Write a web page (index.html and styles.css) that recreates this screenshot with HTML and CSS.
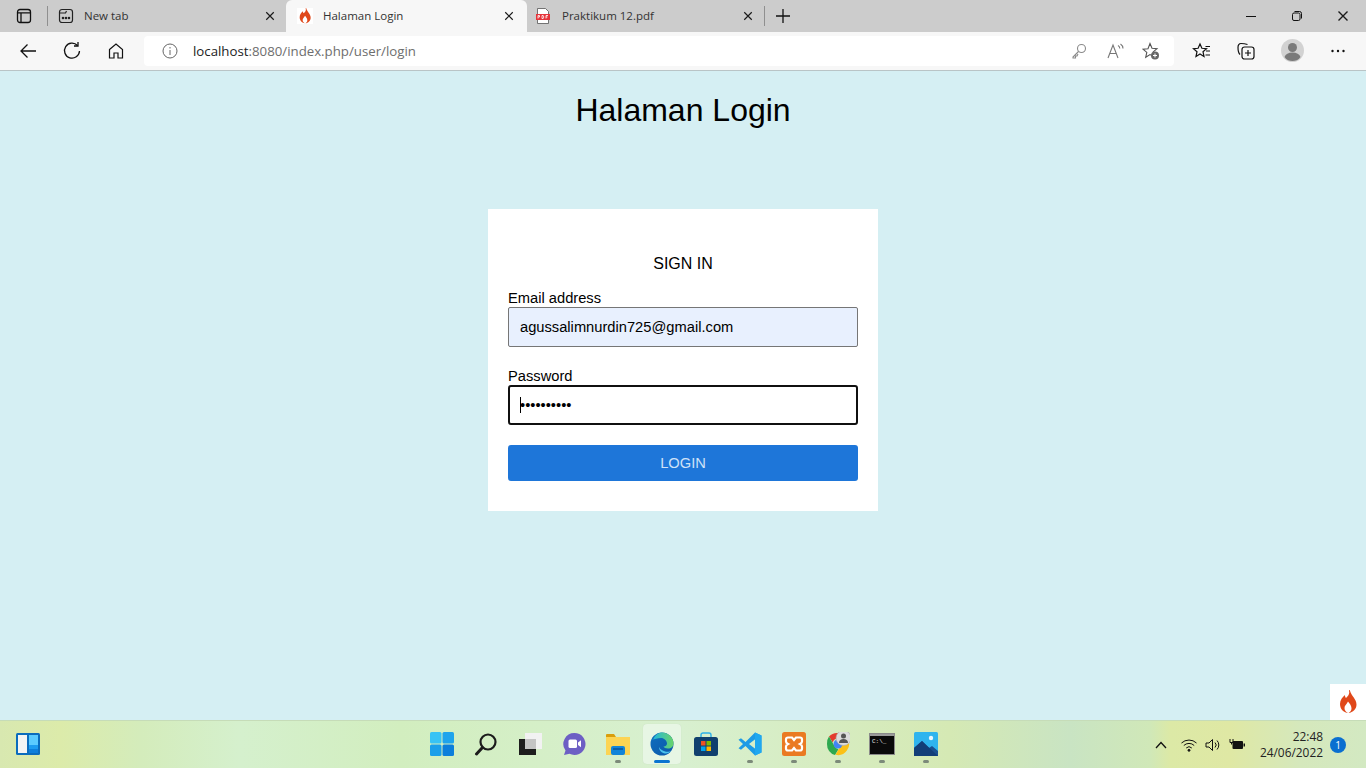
FILE: index.html
```html
<!DOCTYPE html>
<html lang="en">
<head>
    <meta charset="UTF-8">
    <title>Halaman Login</title>
    <link rel="stylesheet" href="styles.css">
</head>
<body>
    <svg class="defs" width="0" height="0">
        <symbol id="flame" viewBox="0 0 24 24">
            <path fill="#e0481a" d="M13 1c1 3-1 5-3 7-1-1-1-2-1-3-2.500 2-5 5-5 9 0 5 3.500 8.500 8 9-2-1-3.500-2.500-3.500-5 0-2.500 2-3.500 3.500-6.500 1 1.500 3.500 3.800 3.500 6.800 0 2-1 3.700-3 4.700 4.500-.5 8-4 8-8.500 0-6-5.500-8-7-15.500z"/>
        </symbol>
        <symbol id="close" viewBox="0 0 12 12">
            <path d="M1.500 1.500l9 9M10.500 1.500l-9 9" fill="none" stroke="#1a1a1a" stroke-width="1.400"/>
        </symbol>
    </svg>

    <!-- Tab strip -->
    <div class="tabstrip">
        <div class="tab-actions">
            <svg width="16" height="16" viewBox="0 0 16 16" fill="none" stroke="#111" stroke-width="1.300"><rect x="1.500" y="1.500" width="13" height="13" rx="2.500"/><path d="M1.500 4.800h13M5 4.800v9.700"/></svg>
        </div>
        <span class="tab-sep"></span>
        <div class="tab tab-first">
            <svg class="tab-icon" width="16" height="16" viewBox="0 0 16 16" fill="none" stroke="#222" stroke-width="1.200"><rect x="1.500" y="1.500" width="13" height="13" rx="2.500"/><path d="M1.500 5h6l1-2"/><circle cx="5" cy="10" r=".7" fill="#222"/><circle cx="8" cy="10" r=".7" fill="#222"/><circle cx="11" cy="10" r=".7" fill="#222"/></svg>
            <span class="tab-title">New tab</span>
            <svg class="tab-close" width="10" height="10"><use href="#close"/></svg>
        </div>
        <div class="tab tab-active">
            <svg class="tab-icon tab-icon-ci" width="16" height="16"><use href="#flame"/></svg>
            <span class="tab-title">Halaman Login</span>
            <svg class="tab-close" width="10" height="10"><use href="#close"/></svg>
        </div>
        <div class="tab tab-last">
            <svg class="tab-icon" width="16" height="16" viewBox="0 0 16 16"><path d="M2.500.5h8l3 3v12h-11z" fill="#fff" stroke="#555" stroke-width=".8"/><rect x="1" y="6" width="14" height="6" fill="#e5343a"/><path d="M3 7.500v3M3 7.500h1.500v1.500H3M7 7.500v3h1.200l.6-1.500-.6-1.500zM11 7.500v3M11 7.500h2M11 9h1.500" fill="none" stroke="#fff" stroke-width=".8"/></svg>
            <span class="tab-title">Praktikum 12.pdf</span>
            <svg class="tab-close" width="10" height="10"><use href="#close"/></svg>
        </div>
        <span class="tab-sep"></span>
        <div class="new-tab">
            <svg width="16" height="16" viewBox="0 0 16 16"><path d="M8 1v14M1 8h14" stroke="#111" stroke-width="1.300"/></svg>
        </div>
        <div class="window-controls">
            <div class="win-btn"><svg width="12" height="12" viewBox="0 0 12 12"><path d="M1 6.500h10" stroke="#111" stroke-width="1"/></svg></div>
            <div class="win-btn"><svg width="12" height="12" viewBox="0 0 12 12" fill="none" stroke="#111"><rect x="1.500" y="3" width="7.500" height="7.500" rx="1.500"/><path d="M3.500 1.500h5a2 2 0 0 1 2 2v5"/></svg></div>
            <div class="win-btn"><svg width="12" height="12"><use href="#close"/></svg></div>
        </div>
    </div>

    <!-- Toolbar -->
    <div class="toolbar">
        <div class="tool-btn"><svg width="20" height="20" viewBox="0 0 20 20" fill="none" stroke="#111" stroke-width="1.300"><path d="M18 10H3M9.500 3.500L3 10l6.500 6.500"/></svg></div>
        <div class="tool-btn"><svg width="20" height="20" viewBox="0 0 20 20" fill="none" stroke="#111" stroke-width="1.300"><path d="M15.500 4.500A7.500 7.500 0 1 0 17.500 10"/><path d="M16 1v4h-4"/></svg></div>
        <div class="tool-btn"><svg width="18" height="18" viewBox="0 0 18 18" fill="none" stroke="#111" stroke-width="1.200"><path d="M2.500 7.500L9 2l6.500 5.500V16h-4.500v-5H7v5H2.500z"/></svg></div>
        <div class="address">
            <svg class="info" width="16" height="16" viewBox="0 0 16 16" fill="none" stroke="#666" stroke-width="1"><circle cx="8" cy="8" r="7"/><path d="M8 7v5M8 4v1.500"/></svg>
            <span class="url"><span class="url-host">localhost</span>:8080/index.php/user/login</span>
            <div class="address-icons">
                <svg width="16" height="16" viewBox="0 0 16 16" fill="none" stroke="#8a8a8a" stroke-width="1.100"><circle cx="10.500" cy="5.500" r="4"/><path d="M7.500 8.500L2 14v1h2.500v-2H6l1-2"/></svg>
                <svg class="read-aloud" width="18" height="16" viewBox="0 0 18 16" fill="none" stroke="#777" stroke-width="1.100"><path d="M1 15L6 2l5 13M2.800 10.500h6.400M11 2.500c1.200.7 1.800 1.800 1.800 3M13.500 1c1.500 1 2.500 2.500 2.500 4.500"/></svg>
                <svg width="18" height="18" viewBox="0 0 18 18"><path d="M8 1.500l2 4.700 5 .4-3.800 3.300 1.100 4.900L8 12.600l-4.300 2.700 1.100-4.900L1 7.100l5-.4z" fill="none" stroke="#555" stroke-width="1.100"/><circle cx="13" cy="13.500" r="4" fill="#666"/><path d="M13 11.500v4M11 13.500h4" stroke="#fff" stroke-width="1"/></svg>
            </div>
        </div>
        <div class="tool-btn tool-fav"><svg width="20" height="18" viewBox="0 0 20 18" fill="none" stroke="#111" stroke-width="1.200"><path d="M8 2l1.900 4.300 4.600.4-3.500 3 1 4.800L8 12l-4 2.500 1-4.800-3.500-3 4.600-.4z"/><path d="M13.500 4.500H18M14 9h4M13.500 13H18"/></svg></div>
        <div class="tool-btn"><svg width="18" height="18" viewBox="0 0 18 18" fill="none" stroke="#111" stroke-width="1.200"><path d="M3 12.500C1.500 11 1 8 1 5.500 1 3 2 1.500 4 1.500c2 0 5 .5 6.500 1"/><rect x="5" y="5" width="12" height="12" rx="2.500"/><path d="M11 8v6M8 11h6"/></svg></div>
        <div class="tool-btn tool-avatar">
            <svg width="23" height="23" viewBox="0 0 23 23"><circle cx="11.500" cy="11.500" r="11.500" fill="#d2d2d2"/><circle cx="11.500" cy="8.500" r="4.500" fill="#7a7a7a"/><path d="M3.500 18c1-3 4-4.500 8-4.500s7 1.500 8 4.500c-2 3-5 4-8 4s-6-1-8-4z" fill="#7a7a7a"/></svg>
        </div>
        <div class="tool-btn tool-more"><svg width="16" height="4" viewBox="0 0 16 4" fill="#111"><circle cx="2.500" cy="2" r="1.200"/><circle cx="8" cy="2" r="1.200"/><circle cx="13.500" cy="2" r="1.200"/></svg></div>
    </div>

    <!-- Page -->
    <main class="page">
        <h1 class="page-title">Halaman Login</h1>
        <form class="login-card">
            <h5 class="card-title">SIGN IN</h5>
            <label class="field-label" for="email">Email address</label>
            <input class="field field-filled" id="email" type="text" value="agussalimnurdin725@gmail.com">
            <label class="field-label" for="password">Password</label>
            <div class="field-wrap">
                <input class="field field-focus" id="password" type="password" value="1234567890">
                <span class="caret"></span>
            </div>
            <button class="login-btn" type="button">LOGIN</button>
        </form>
        <div class="ci-toolbar"><svg width="24" height="24"><use href="#flame"/></svg></div>
    </main>

    <!-- Taskbar -->
    <footer class="taskbar">
        <div class="widgets">
            <svg width="24" height="22" viewBox="0 0 24 22"><rect width="24" height="22" rx="1.500" fill="#0b6cbd"/><rect x="2" y="2" width="9" height="18" fill="#f4f4f4"/><rect x="13" y="2" width="9" height="10" fill="#5bcbff"/><rect x="13" y="12" width="9" height="4" fill="#1d9cf0"/><rect x="13" y="16" width="9" height="4" fill="#0d7fdc"/></svg>
        </div>
        <div class="task-icons">
            <div class="task-icon">
                <svg width="24" height="24" viewBox="0 0 24 24"><rect width="11.500" height="11.500" rx="1.500" fill="#38c3f5"/><rect x="12.500" width="11.500" height="11.500" rx="1.500" fill="#1fa4ec"/><rect y="12.500" width="11.500" height="11.500" rx="1.500" fill="#1b9fe9"/><rect x="12.500" y="12.500" width="11.500" height="11.500" rx="1.500" fill="#0c7fdb"/></svg>
            </div>
            <div class="task-icon">
                <svg width="24" height="24" viewBox="0 0 24 24" fill="none" stroke="#1c1c1c"><circle cx="14" cy="10" r="7.500" stroke-width="2.200"/><path d="M8.500 15.500L2.500 22" stroke-width="3" stroke-linecap="round"/></svg>
            </div>
            <div class="task-icon">
                <svg width="24" height="24" viewBox="0 0 24 24"><rect x="1" y="7" width="17" height="16" fill="#1d1d1d"/><rect x="7" y="1" width="17" height="16" fill="#f2f2f2"/><rect x="7" y="7" width="11" height="10" fill="#c4c4c4"/></svg>
            </div>
            <div class="task-icon">
                <svg width="24" height="24" viewBox="0 0 24 24"><path d="M12.500 1a11 11 0 1 1-5 20.800L2 23l1.500-4.500A11 11 0 0 1 12.500 1z" fill="#6d5fc4"/><rect x="6.500" y="7.500" width="8.500" height="8.500" rx="1.500" fill="#fff"/><path d="M16 10.500l3-2.200v7l-3-2.200z" fill="#fff"/></svg>
            </div>
            <div class="task-icon task-open">
                <svg width="24" height="22" viewBox="0 0 24 22"><path d="M0 2a1 1 0 0 1 1-1h7l2 3h-10z" fill="#d99e0c"/><rect y="4" width="24" height="18" fill="#fcd453"/><rect x="5" y="13" width="14" height="9" rx="2" fill="#1285d8"/><rect x="7" y="15" width="10" height="2" fill="#0b5fa8"/></svg>
            </div>
            <div class="task-icon task-active">
                <svg width="24" height="24" viewBox="0 0 24 24"><defs><linearGradient id="edge" x1="0" y1="0" x2="1" y2="1"><stop offset="0" stop-color="#0f6fc0"/><stop offset="1" stop-color="#0c58a8"/></linearGradient><linearGradient id="edge2" x1="0" y1="0" x2="1" y2="0"><stop offset="0" stop-color="#1fb5e0"/><stop offset="1" stop-color="#6ad46a"/></linearGradient></defs><circle cx="12" cy="12" r="11.500" fill="url(#edge)"/><path d="M3 8C5 2.500 9 .5 12 .5c6.500 0 11.500 5 11.500 11 0 3-2.500 5-5.500 5-2.500 0-4-1-4.500-2 2.500 0 3.500-1.500 3.500-3 0-3-3-5.500-6-5.500-3.500 0-6.500 1-9 2z" fill="url(#edge2)"/><path d="M9 15c0 3.500 3 6 6 6.500 2.500.3 5-1 6.500-3-2 1.500-4 1.500-5.500 1.200C13 19 10 17.500 9 15z" fill="#4cc3ee"/></svg>
            </div>
            <div class="task-icon">
                <svg width="24" height="24" viewBox="0 0 24 24"><path d="M7 6V3a2 2 0 0 1 2-2h6a2 2 0 0 1 2 2v3" fill="none" stroke="#2cb1e8" stroke-width="1.400"/><rect y="5" width="24" height="19" rx="2.500" fill="#10406e"/><rect x="7" y="9" width="4.500" height="4.500" fill="#f05022"/><rect x="12.500" y="9" width="4.500" height="4.500" fill="#7fba00"/><rect x="7" y="14.500" width="4.500" height="4.500" fill="#00a4ef"/><rect x="12.500" y="14.500" width="4.500" height="4.500" fill="#ffb900"/></svg>
            </div>
            <div class="task-icon task-open">
                <svg width="24" height="24" viewBox="0 0 24 24"><path d="M17 .5L7.500 10 3 6.300.5 7.800 5 12 .5 16.200 3 17.700 7.500 14l9.500 9.500 6.500-3V3.500zM17.500 7v10L11 12z" fill="#1d9be6"/><path d="M17 .5l6.500 3v17l-6.500 3z" fill="#1fa8f0"/></svg>
            </div>
            <div class="task-icon task-open">
                <svg width="24" height="24" viewBox="0 0 24 24"><rect width="24" height="24" rx="2.500" fill="#ea7a22"/><path d="M6 5.500h4l2 2.500 2-2.500h4c1.500 0 2 1 2 2v2c0 1-1 2-2 2.500 1 .5 2 1.500 2 2.500v2c0 1-.5 2-2 2h-4l-2-2.500-2 2.500H6c-1.500 0-2-1-2-2v-2c0-1 1-2 2-2.500-1-.5-2-1.500-2-2.500v-2c0-1 .5-2 2-2z" fill="none" stroke="#fff" stroke-width="2.200"/></svg>
            </div>
            <div class="task-icon task-open">
                <svg width="24" height="24" viewBox="0 0 24 24"><path d="M12 1a11 11 0 0 1 9.500 5.500H12a5.500 5.500 0 0 0-5.300 4L3 4.500A11 11 0 0 1 12 1z" fill="#e33b2e"/><path d="M1 12a11 11 0 0 1 2-7.500l5.500 9.500a5.500 5.500 0 0 0 4 3.300L9 23A11 11 0 0 1 1 12z" fill="#2da94f"/><path d="M21.500 6.500A11 11 0 0 1 9.500 22.800l5-8.800A5.500 5.500 0 0 0 15 8z" fill="#fbc116"/><circle cx="12" cy="12" r="4.500" fill="#4285f4"/><circle cx="17.500" cy="6" r="7.500" fill="#dcdcdc" stroke="#aaa" stroke-width=".6"/><circle cx="17.500" cy="4" r="2.500" fill="#555"/><path d="M13 11c0-3 2-4 4.500-4s4.500 1 4.500 4z" fill="#555"/></svg>
            </div>
            <div class="task-icon task-open">
                <div class="terminal"><span class="terminal-text">C:\_</span></div>
            </div>
            <div class="task-icon task-open">
                <svg width="24" height="24" viewBox="0 0 24 24"><rect width="24" height="24" rx="1.500" fill="#2fb4ee"/><circle cx="17" cy="6" r="2.200" fill="#e8f6ff"/><path d="M0 16l8-7 7 7 3-2 6 5v5H0z" fill="#1a4f8f"/><path d="M8 9l16 15H0V16z" fill="#123e78"/></svg>
            </div>
        </div>
        <div class="tray">
            <svg class="tray-chevron" width="12" height="8" viewBox="0 0 12 8" fill="none" stroke="#111" stroke-width="1.300"><path d="M1 7l5-5.500L11 7"/></svg>
            <svg width="16" height="14" viewBox="0 0 16 14" fill="none" stroke="#111" stroke-width="1"><path d="M.5 5a11 11 0 0 1 15 0M2.800 7.500a7.500 7.500 0 0 1 10.400 0M5.200 10a4 4 0 0 1 5.600 0"/><circle cx="8" cy="12.300" r="1" fill="#111"/></svg>
            <svg width="16" height="14" viewBox="0 0 16 14" fill="none" stroke="#111" stroke-width="1"><path d="M1 5v4h3l3.500 3.500v-11L4 5zM10 4.500a3.500 3.500 0 0 1 0 5M12 2.500a6.500 6.500 0 0 1 0 9"/></svg>
            <svg width="16" height="14" viewBox="0 0 16 14"><path d="M1 1v3.500h3V1M2.500 4.500v2" fill="none" stroke="#111" stroke-width="1"/><rect x="3.500" y="3" width="10.500" height="8" rx="1" fill="#111"/><rect x="14.500" y="5.500" width="1.500" height="3" fill="#111"/></svg>
            <div class="clock">
                <span>22:48</span>
                <span>24/06/2022</span>
            </div>
            <span class="notif">1</span>
        </div>
    </footer>
</body>
</html>
```

FILE: styles.css
```css
* {
    box-sizing: border-box;
}
html, body {
    height: 100%;
}
body {
    margin: 0;
    height: 768px;
    overflow: hidden;
    display: flex;
    flex-direction: column;
    font-family: "Open Sans", sans-serif;
    background-color: #d5eff3;
}
.defs {
    position: absolute;
}

/* tab strip */
.tabstrip {
    display: flex;
    align-items: stretch;
    height: 32px;
    flex-shrink: 0;
    background-color: #cccccc;
}
.tab-actions {
    width: 47px;
    display: flex;
    align-items: center;
    justify-content: center;
}
.tab-sep {
    width: 1px;
    height: 20px;
    align-self: center;
    background-color: #8f8f8f;
}
.tab {
    display: flex;
    align-items: center;
    font-size: 11.500px;
    color: #333;
}
.tab-first {
    width: 238px;
    padding: 0 11px 0 10px;
}
.tab-active {
    width: 241px;
    padding: 0 13px 0 11px;
    background-color: #f7f7f7;
    border-radius: 6px 6px 0 0;
}
.tab-last {
    width: 237px;
    padding: 0 11px 0 8px;
}
.tab-last .tab-icon {
    margin-right: 11px;
}
.tab-icon {
    flex-shrink: 0;
    margin-right: 10px;
}
.tab-icon-ci {
    background-color: #fff;
}
.tab-title {
    flex: 1;
    margin-top: -2px;
}
.new-tab {
    width: 36px;
    display: flex;
    align-items: center;
    justify-content: center;
}
.window-controls {
    margin-left: auto;
    display: flex;
}
.win-btn {
    width: 46px;
    display: flex;
    align-items: center;
    justify-content: center;
}

/* toolbar */
.toolbar {
    display: flex;
    align-items: center;
    height: 39px;
    flex-shrink: 0;
    padding: 0 6px 1px;
    background-color: #f7f7f7;
    border-bottom: 1px solid #b9c4c6;
}
.tool-btn {
    width: 44px;
    height: 30px;
    flex-shrink: 0;
    display: flex;
    align-items: center;
    justify-content: center;
}
.tool-fav {
    margin-left: 6px;
}
.tool-avatar, .tool-more {
    margin-left: 2px;
}
.address {
    flex: 1;
    height: 30px;
    margin-left: 6px;
    display: flex;
    align-items: center;
    padding: 0 14px 0 18px;
    background-color: #fff;
    border-radius: 4px;
}
.info {
    margin-right: 15px;
}
.url {
    font-family: "Open Sans", sans-serif;
    font-size: 13.250px;
    color: #6e6e6e;
}
.url-host {
    color: #222;
}
.address-icons {
    margin-left: auto;
    display: flex;
    align-items: center;
    gap: 20px;
}
.read-aloud {
    margin: 0 -3px 0 0;
}

/* page */
.page {
    position: relative;
    flex: 1;
    display: flex;
    flex-direction: column;
    align-items: center;
    font-family: "Liberation Sans", Arial, sans-serif;
    color: #000;
}
.page-title {
    margin: 21px 0 80px;
    font-size: 32px;
    font-weight: 400;
    line-height: 37px;
}
.login-card {
    width: 390px;
    padding: 46px 20px 30px;
    background-color: #fff;
}
.card-title {
    margin: 0 0 16px;
    font-size: 16px;
    font-weight: 400;
    line-height: 18px;
    text-align: center;
}
.field-label {
    display: block;
    font-size: 14.700px;
    line-height: 18px;
}
.field {
    display: block;
    width: 100%;
    height: 40px;
    margin-bottom: 20px;
    padding: 0 11px;
    border: 1px solid #767676;
    border-radius: 2px;
    outline: none;
    font-family: "Liberation Sans", Arial, sans-serif;
    font-size: 14.700px;
    color: #000;
    background-color: #fff;
}
.field-filled {
    background-color: #e8f0fe;
}
.field-focus {
    padding: 0 10px;
    border: 2px solid #101010;
    border-radius: 3px;
}
.field-wrap {
    position: relative;
}
.caret {
    position: absolute;
    left: 12px;
    top: 12px;
    width: 1px;
    height: 16px;
    background-color: #000;
}
.login-btn {
    display: block;
    width: 100%;
    height: 36px;
    border: none;
    border-radius: 3px;
    font-family: "Liberation Sans", Arial, sans-serif;
    font-size: 14.700px;
    color: #cfe2f8;
    background-color: #1e76d9;
}
.ci-toolbar {
    position: absolute;
    right: 0;
    bottom: 0;
    width: 36px;
    height: 36px;
    display: flex;
    align-items: center;
    justify-content: center;
    background-color: #fff;
}

/* taskbar */
.taskbar {
    position: relative;
    height: 48px;
    flex-shrink: 0;
    display: flex;
    align-items: center;
    justify-content: center;
    border-top: 1px solid #c6dcb8;
    background: linear-gradient(90deg, #d8e8b0 0, #dcebaa 60px, #d4ecbb 140px, #d5f0cd 240px, #d2eebf 400px, #d8f0d0 680px, #d5e9b4 950px, #c9e4c3 1070px, #d0e8b8 1150px, #dce9a6 1170px, #dfe8a4 1230px, #d5e8bc 1300px, #d3e9c2 1366px);
}
.widgets {
    position: absolute;
    left: 16px;
    top: 12px;
    display: flex;
}
.task-icons {
    display: flex;
    margin: 0 0 2px 2px;
}
.task-icon {
    position: relative;
    width: 44px;
    height: 40px;
    display: flex;
    align-items: center;
    justify-content: center;
}
.task-open::after {
    content: "";
    position: absolute;
    left: 19px;
    bottom: 1px;
    width: 6px;
    height: 3px;
    border-radius: 2px;
    background-color: #7c8a7a;
}
.task-active {
    width: 38px;
    margin: 0 3px;
    border-radius: 4px;
    background-color: #e7f6e4;
    box-shadow: 0 0 1px #c4d8c0;
}
.task-active::after {
    content: "";
    position: absolute;
    left: 11px;
    bottom: 1px;
    width: 16px;
    height: 3px;
    border-radius: 2px;
    background-color: #0a74d0;
}
.terminal {
    width: 24px;
    height: 20px;
    padding: 3px 0 0 2px;
    background-color: #0a0a0a;
    border-top: 2px solid #9a9a9a;
    box-shadow: 0 0 0 1px #8a8a8a;
}
.terminal-text {
    display: block;
    font-family: "Liberation Mono", monospace;
    font-size: 6px;
    line-height: 6px;
    color: #e6e6e6;
}
.tray {
    position: absolute;
    right: 20px;
    top: 0;
    bottom: 0;
    display: flex;
    align-items: center;
    font-size: 11.900px;
    color: #222;
}
.tray > svg {
    margin-right: 8px;
}
.tray > .tray-chevron {
    margin-right: 14px;
}
.clock {
    width: 70px;
    margin: -2px 7px 0 0;
    display: flex;
    flex-direction: column;
    align-items: flex-end;
    line-height: 16px;
    white-space: nowrap;
}
.notif {
    width: 16px;
    height: 16px;
    border-radius: 50%;
    display: flex;
    align-items: center;
    justify-content: center;
    font-size: 10px;
    color: #fff;
    background-color: #0a6fd0;
}
```
